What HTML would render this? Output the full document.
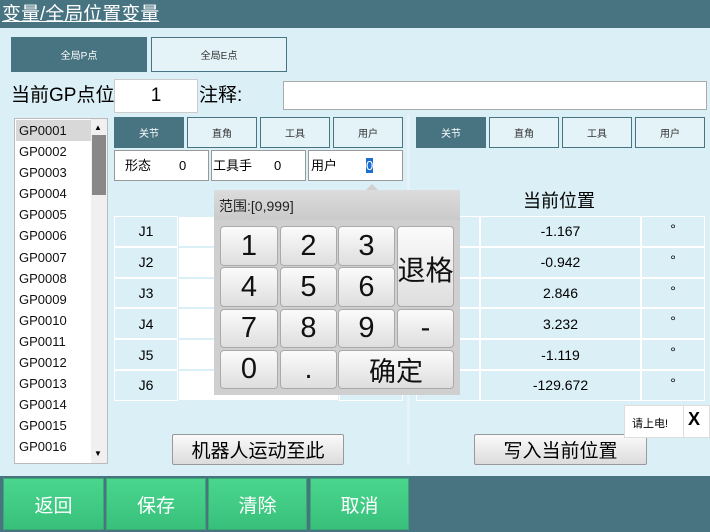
<!DOCTYPE html>
<html><head><meta charset="utf-8"><style>
*{margin:0;padding:0;box-sizing:border-box}
body{width:710px;height:532px;overflow:hidden;background:#daeff6;font-family:"Liberation Sans","Noto Sans CJK SC",sans-serif;position:relative;color:#000}
.a{position:absolute}
.hdr{left:0;top:0;width:710px;height:28px;background:#487482;color:#fff;font-size:19px;line-height:30px;padding-left:2px;text-decoration:underline;text-underline-offset:1px}
.tab{display:flex;align-items:center;justify-content:center;font-size:10px;border:1px solid #487482}
.dk{background:#487482;color:#fff}
.lt{background:#e4f3f8;color:#333}
.cell{display:flex;align-items:center;justify-content:center}
.kb{position:absolute;border:1px solid #aaa;border-radius:4px;background:linear-gradient(#fbfbfb,#dedede);display:flex;align-items:center;justify-content:center;font-size:29px;color:#111;white-space:nowrap;overflow:visible}
.gb{position:absolute;top:478px;height:52px;background:linear-gradient(#4ad68e,#38c07a);color:#fff;font-size:19px;display:flex;align-items:center;justify-content:center;border:1px solid #3aa872}
.btn{position:absolute;border:1px solid #999;border-radius:2px;background:linear-gradient(#fafafa,#dcdcdc);font-size:19px;display:flex;align-items:center;justify-content:center}
.fb span{position:absolute;top:0;line-height:29px}
</style></head><body>
<div class="a hdr">变量/全局位置变量</div>
<div class="a tab dk" style="left:11px;top:37px;width:136px;height:35px">全局P点</div>
<div class="a tab lt" style="left:151px;top:37px;width:136px;height:35px">全局E点</div>
<div class="a" style="left:11px;top:82px;font-size:19px;line-height:28px">当前GP点位</div>
<div class="a cell" style="left:114px;top:79px;width:84px;height:34px;background:#fff;border:1px solid #ccc;font-size:19px">1</div>
<div class="a" style="left:199px;top:82px;font-size:19px;line-height:28px">注释:</div>
<div class="a" style="left:283px;top:81px;width:424px;height:29px;background:#fff;border:1px solid #aaa"></div>
<!-- list -->
<div class="a" style="left:14px;top:118px;width:94px;height:346px;background:#fff;border:1px solid #bbb;overflow:hidden">
<div style="position:absolute;left:1px;top:1px;width:75px;height:21px;background:#d8d8d8"></div>
<div style="position:absolute;left:4px;top:1px;font-size:13px;line-height:21.1px;color:#111">GP0001<br>GP0002<br>GP0003<br>GP0004<br>GP0005<br>GP0006<br>GP0007<br>GP0008<br>GP0009<br>GP0010<br>GP0011<br>GP0012<br>GP0013<br>GP0014<br>GP0015<br>GP0016<br>GP0017</div>
<div style="position:absolute;left:76px;top:0;width:16px;height:344px;background:#f0f0f0"></div>
<div style="position:absolute;left:77px;top:16px;width:14px;height:60px;background:#888"></div>
<div style="position:absolute;left:79px;top:4px;font-size:8px">▲</div>
<div style="position:absolute;left:79px;top:330px;font-size:8px">▼</div>
</div>
<!-- left panel tabs -->
<div class="a tab dk" style="left:114px;top:117px;width:70px;height:31px">关节</div>
<div class="a tab lt" style="left:187px;top:117px;width:70px;height:31px">直角</div>
<div class="a tab lt" style="left:260px;top:117px;width:70px;height:31px">工具</div>
<div class="a tab lt" style="left:333px;top:117px;width:70px;height:31px">用户</div>
<div class="a fb" style="left:114px;top:150px;width:95px;height:31px;background:#fff;border:1px solid #999;font-size:13px"><span style="left:10px">形态</span><span style="left:64px">0</span></div>
<div class="a fb" style="left:211px;top:150px;width:95px;height:31px;background:#fff;border:1px solid #999;font-size:13px"><span style="left:1px">工具手</span><span style="left:62px">0</span></div>
<div class="a fb" style="left:308px;top:150px;width:95px;height:31px;background:#fff;border:1px solid #999;font-size:13px"><span style="left:2px">用户</span><span style="left:57px;top:7px;line-height:15px;background:#1a6fd0;color:#fff">0</span></div>
<div class="a" style="left:407px;top:115px;width:3px;height:350px;background:#e6f4f9"></div>
<!-- left table -->
<div class="a" style="left:114px;top:216px;width:289px;height:185px">
<div style="display:grid;grid-template-columns:64px 161px 64px;grid-auto-rows:30.8px;gap:0">
<div class="cell" style="border:1px solid #fff;font-size:14px">J1</div><div style="background:#fff;border:1px solid #daeff6"></div><div style="border:1px solid #fff"></div>
<div class="cell" style="border:1px solid #fff;font-size:14px">J2</div><div style="background:#fff;border:1px solid #daeff6"></div><div style="border:1px solid #fff"></div>
<div class="cell" style="border:1px solid #fff;font-size:14px">J3</div><div style="background:#fff;border:1px solid #daeff6"></div><div style="border:1px solid #fff"></div>
<div class="cell" style="border:1px solid #fff;font-size:14px">J4</div><div style="background:#fff;border:1px solid #daeff6"></div><div style="border:1px solid #fff"></div>
<div class="cell" style="border:1px solid #fff;font-size:14px">J5</div><div style="background:#fff;border:1px solid #daeff6"></div><div style="border:1px solid #fff"></div>
<div class="cell" style="border:1px solid #fff;font-size:14px">J6</div><div style="background:#fff;border:1px solid #daeff6"></div><div style="border:1px solid #fff"></div>
</div></div>
<!-- right panel -->
<div class="a tab dk" style="left:416px;top:117px;width:70px;height:31px">关节</div>
<div class="a tab lt" style="left:489px;top:117px;width:70px;height:31px">直角</div>
<div class="a tab lt" style="left:562px;top:117px;width:70px;height:31px">工具</div>
<div class="a tab lt" style="left:635px;top:117px;width:70px;height:31px">用户</div>
<div class="a" style="left:523px;top:187px;font-size:18px">当前位置</div>
<div class="a" style="left:416px;top:216px;width:289px;height:185px">
<div style="display:grid;grid-template-columns:64px 161px 64px;grid-auto-rows:30.8px;font-size:14px">
<div style="border:1px solid #fff"></div><div class="cell" style="border:1px solid #fff">-1.167</div><div class="cell" style="border:1px solid #fff;align-items:flex-start;padding-top:4px">°</div>
<div style="border:1px solid #fff"></div><div class="cell" style="border:1px solid #fff">-0.942</div><div class="cell" style="border:1px solid #fff;align-items:flex-start;padding-top:4px">°</div>
<div style="border:1px solid #fff"></div><div class="cell" style="border:1px solid #fff">2.846</div><div class="cell" style="border:1px solid #fff;align-items:flex-start;padding-top:4px">°</div>
<div style="border:1px solid #fff"></div><div class="cell" style="border:1px solid #fff">3.232</div><div class="cell" style="border:1px solid #fff;align-items:flex-start;padding-top:4px">°</div>
<div style="border:1px solid #fff"></div><div class="cell" style="border:1px solid #fff">-1.119</div><div class="cell" style="border:1px solid #fff;align-items:flex-start;padding-top:4px">°</div>
<div style="border:1px solid #fff"></div><div class="cell" style="border:1px solid #fff">-129.672</div><div class="cell" style="border:1px solid #fff;align-items:flex-start;padding-top:4px">°</div>
</div></div>
<!-- keypad -->
<div class="a" style="left:366px;top:184px;width:0;height:0;border-left:6px solid transparent;border-right:6px solid transparent;border-bottom:6px solid #d0d0d0"></div>
<div class="a" style="left:214px;top:190px;width:246px;height:205px;background:#cfcfcf">
<div style="height:30px;background:linear-gradient(#dcdcdc,#cacaca);font-size:14px;line-height:32px;padding-left:5px;color:#222">范围:[0,999]</div>
</div>
<div class="kb" style="left:220px;top:226px;width:58px;height:40px">1</div>
<div class="kb" style="left:280px;top:226px;width:57px;height:40px">2</div>
<div class="kb" style="left:338px;top:226px;width:57px;height:40px">3</div>
<div class="kb" style="left:397px;top:226px;width:57px;height:81px;font-size:28px;align-items:flex-start;padding-top:22px">退格</div>
<div class="kb" style="left:220px;top:267px;width:58px;height:40px">4</div>
<div class="kb" style="left:280px;top:267px;width:57px;height:40px">5</div>
<div class="kb" style="left:338px;top:267px;width:57px;height:40px">6</div>
<div class="kb" style="left:220px;top:309px;width:58px;height:39px">7</div>
<div class="kb" style="left:280px;top:309px;width:57px;height:39px">8</div>
<div class="kb" style="left:338px;top:309px;width:57px;height:39px">9</div>
<div class="kb" style="left:397px;top:309px;width:57px;height:39px">-</div>
<div class="kb" style="left:220px;top:350px;width:58px;height:39px">0</div>
<div class="kb" style="left:280px;top:350px;width:57px;height:39px">.</div>
<div class="kb" style="left:338px;top:350px;width:116px;height:39px;font-size:27px">确定</div>
<!-- buttons -->
<div class="btn" style="left:172px;top:434px;width:172px;height:31px">机器人运动至此</div>
<div class="btn" style="left:474px;top:434px;width:173px;height:31px">写入当前位置</div>
<div class="a" style="left:624px;top:405px;width:86px;height:33px;background:#fff;border:1px solid #ddd"></div>
<div class="a" style="left:632px;top:415px;font-size:11px">请上电!</div>
<div class="a" style="left:683px;top:405px;width:1px;height:33px;background:#ddd"></div>
<div class="a" style="left:688px;top:409px;font-size:18px;font-weight:bold">X</div>
<!-- bottom -->
<div class="a" style="left:0;top:476px;width:710px;height:56px;background:#487482"></div>
<div class="gb" style="left:3px;width:101px">返回</div>
<div class="gb" style="left:106px;width:100px">保存</div>
<div class="gb" style="left:208px;width:99px">清除</div>
<div class="gb" style="left:310px;width:99px">取消</div>
</body></html>
